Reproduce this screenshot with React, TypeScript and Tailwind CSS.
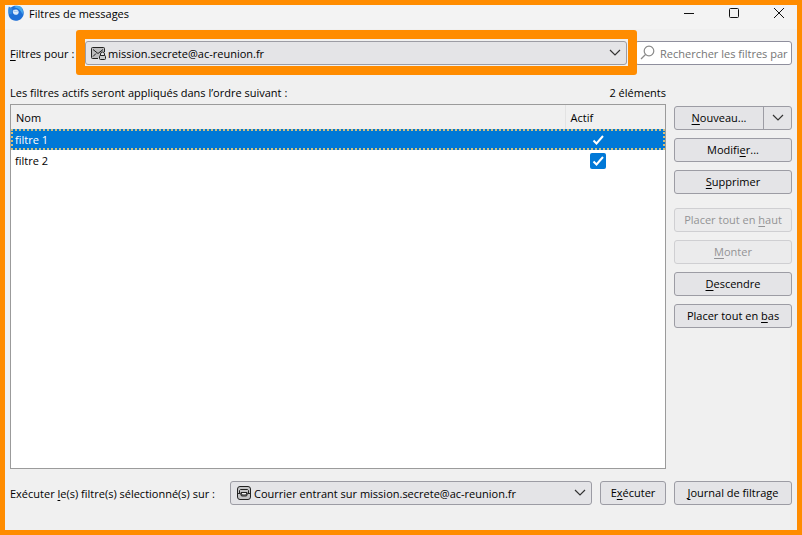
import { useState } from 'react'
import type { ButtonHTMLAttributes, ReactNode } from 'react'

type Filter = { name: string; enabled: boolean }

const initialFilters: Filter[] = [
  { name: 'filtre 1', enabled: true },
  { name: 'filtre 2', enabled: true },
]

// access key letter
function Key({ children }: { children: ReactNode }) {
  return <span className="underline decoration-1 underline-offset-2">{children}</span>
}

function Chevron() {
  return (
    <svg className="h-3 w-3 shrink-0" viewBox="0 0 12 12" fill="none" stroke="#333" strokeWidth="1.2">
      <path d="M1 3 6 8 11 3" />
    </svg>
  )
}

function Button({ children, ...props }: ButtonHTMLAttributes<HTMLButtonElement>) {
  return (
    <button
      type="button"
      className="flex h-6 w-full items-center justify-center rounded-[3px] border border-[#9c9ca4] bg-[#e4e4e7] text-black disabled:border-[#cfcfd2] disabled:bg-[#ebebec] disabled:text-[#939395]"
      {...props}
    >
      <span className="whitespace-nowrap">{children}</span>
    </button>
  )
}

function ThunderbirdLogo() {
  return (
    <svg className="h-4 w-4 shrink-0" viewBox="0 0 16 16">
      <path d="M3 2.5C6-.2 11.5.2 14.3 3.6c2.3 3.2 1.8 7.9-1.3 10.3-3.1 2.5-8.4 2.4-11-.8C-.2 10.3-.1 5.800 3 2.500z" fill="#1e6fd6" />
      <path d="M.8 1.500 4.500 3.500 3.500 9.500.5 8.500C-.1 6 .1 3.500.8 1.500z" fill="#3489e0" />
      <path d="M6 2.200C8.500-.3 12.500.5 14 3c1.200 2 1.200 4.500.3 6.500C13.500 6 11 3.200 6 2.200z" fill="#46a8ee" />
      <path d="M5 5 8 4.500c1.800.2 2.900 1.400 2.700 3-.3 1.600-1.600 2.500-3.100 2.300C5.800 9.700 4.800 8.300 4.800 6.500z" fill="#dcebfb" />
      <path d="M5 5.400c1.100 1.300 3.200 1.500 5 .4" stroke="#9fc4ee" fill="none" />
    </svg>
  )
}

export default function App() {
  const [filters, setFilters] = useState(initialFilters)
  const [selected, setSelected] = useState(0)

  const toggle = (index: number) =>
    setFilters(list => list.map((f, i) => (i === index ? { ...f, enabled: !f.enabled } : f)))

  return (
    <div className="flex min-h-screen flex-col border-[5px] border-[#ff8c00] bg-[#f0f0f0] font-['Open_Sans','Noto_Sans',sans-serif] text-[11px] leading-4 text-black">
      <header className="flex h-6 items-start bg-[#f3f3f3] pr-3 pl-[3px]">
        <ThunderbirdLogo />
        <h1 className="ml-[5px] flex-1 pt-px">Filtres de messages</h1>
        <div className="flex gap-[33px]">
          <button type="button" aria-label="Réduire" className="flex h-4 w-3 items-center justify-center">
            <svg className="h-3 w-3" viewBox="0 0 12 12" stroke="#111"><path d="M1 6.500h10" /></svg>
          </button>
          <button type="button" aria-label="Agrandir" className="flex h-4 w-3 items-center justify-center">
            <svg className="h-3 w-3" viewBox="0 0 12 12" fill="none" stroke="#111"><rect x="1.500" y="1.500" width="9" height="9" rx="1" /></svg>
          </button>
          <button type="button" aria-label="Fermer" className="flex h-4 w-3 items-center justify-center">
            <svg className="h-3 w-3" viewBox="0 0 12 12" stroke="#111"><path d="m1 1 10 10M11 1 1 11" /></svg>
          </button>
        </div>
      </header>

      <main className="flex flex-1 flex-col px-[5px] pt-3 pb-[25px]">
        <div className="flex items-center gap-2">
          <label htmlFor="account" className="w-[67px] shrink-0 pt-px whitespace-nowrap">
            <Key>F</Key>iltres pour :
          </label>
          <div className="relative flex h-6 min-w-0 flex-1 items-center rounded-[3px] border border-[#9c9ca4] bg-[#e4e4e7] pr-[5px] pl-1">
            <svg className="h-4 w-4 shrink-0" viewBox="0 0 16 16" fill="none" stroke="#222">
              <path d="M8 13.500H2.500a1 1 0 0 1-1-1v-9a1 1 0 0 1 1-1h11a1 1 0 0 1 1 1V7" fill="#bdbdbf" />
              <path d="m3 4.500 5 4 5-4M3 11.500l3-3" />
              <path d="M10.500 11V9a2 2 0 0 1 4 0v2" fill="#e4e4e7" />
              <rect x="9.500" y="10.500" width="6" height="4" rx="1" fill="#ccc" />
            </svg>
            <select id="account" className="h-full min-w-0 flex-1 appearance-none bg-transparent pt-px pl-0.5 outline-none">
              <option>mission.secrete@ac-reunion.fr</option>
            </select>
            <Chevron />
            {/* highlight around the account picker */}
            <div className="pointer-events-none absolute -top-3 -right-[11px] -bottom-[11px] -left-[10px] rounded-[3px] border-[9px] border-[#ff8c00]" />
          </div>
          <div className="flex h-6 w-[157px] shrink-0 items-center gap-1 rounded-[3px] border border-[#8f8f9d] bg-white pr-[3px] pl-1">
            <svg className="h-4 w-4 shrink-0" viewBox="0 0 16 16" fill="none" stroke="#8a8a8a" strokeWidth="1.2">
              <circle cx="9" cy="6" r="4.8" />
              <path d="m5.500 9.500-4.500 4.500" />
            </svg>
            <input
              type="text"
              aria-label="Rechercher les filtres"
              placeholder="Rechercher les filtres par"
              className="w-0 min-w-0 flex-1 bg-transparent pt-px outline-none placeholder:text-[#757575]"
            />
          </div>
        </div>

        <div className="mt-5 flex flex-1 gap-2">
          <section className="flex min-w-0 flex-1 flex-col">
            <div className="flex justify-between whitespace-nowrap">
              <p>Les filtres actifs seront appliqués dans l’ordre suivant :</p>
              <p>2 éléments</p>
            </div>
            <div className="mt-[3px] flex-1 border border-[#9b9b9b] bg-white">
              <table className="w-full table-fixed border-collapse text-left">
                <thead>
                  <tr className="h-6 bg-[#f0f0f0]">
                    <th className="border-r border-[#e3e3e3] pt-px pl-[5px] font-normal">Nom</th>
                    <th className="w-[100px] pt-px pl-[5px] font-normal">Actif</th>
                  </tr>
                </thead>
                <tbody>
                  {filters.map((f, i) => (
                    <tr
                      key={f.name}
                      onClick={() => setSelected(i)}
                      className={
                        i === selected
                          ? 'h-[21px] bg-[#0078d7] text-white outline-2 -outline-offset-2 outline-dotted outline-[#d0c080]'
                          : 'h-[21px]'
                      }
                    >
                      <td className="pl-1">{f.name}</td>
                      <td className="pl-[25px]">
                        <span className="relative block h-4 w-4">
                          <input
                            type="checkbox"
                            aria-label={f.name}
                            checked={f.enabled}
                            onChange={() => toggle(i)}
                            className="peer block h-4 w-4 appearance-none rounded-[2px] checked:bg-[#0078d7]"
                          />
                          <svg className="pointer-events-none absolute inset-0 hidden peer-checked:block" viewBox="0 0 16 16" fill="none" stroke="#fff" strokeWidth="2">
                            <path d="m3.500 8.500 3 3 6.500-7.500" />
                          </svg>
                        </span>
                      </td>
                    </tr>
                  ))}
                </tbody>
              </table>
            </div>
          </section>

          <div className="flex w-[118px] shrink-0 flex-col gap-2 pt-[21px]">
            <div className="flex h-6 rounded-[3px] border border-[#9c9ca4] bg-[#e4e4e7]">
              <button type="button" className="flex-1"><Key>N</Key>ouveau...</button>
              <button type="button" aria-label="Autres options" className="flex w-7 items-center justify-center border-l border-[#9c9ca4]">
                <Chevron />
              </button>
            </div>
            <Button>Modifi<Key>e</Key>r...</Button>
            <Button><Key>S</Key>upprimer</Button>
            <div className="mt-[6px] flex flex-col gap-2">
              <Button disabled>Placer tout en <Key>h</Key>aut</Button>
              <Button disabled><Key>M</Key>onter</Button>
              <Button><Key>D</Key>escendre</Button>
              <Button>Placer tout en <Key>b</Key>as</Button>
            </div>
          </div>
        </div>

        <footer className="mt-3 flex items-center gap-2">
          <label htmlFor="folder" className="w-[212px] shrink-0 pt-px whitespace-nowrap">
            Exécuter <Key>l</Key>e(s) filtre(s) sélectionné(s) sur :
          </label>
          <div className="flex h-6 min-w-0 flex-1 items-center rounded-[3px] border border-[#9c9ca4] bg-[#e4e4e7] px-[5px]">
            <svg className="h-4 w-4 shrink-0" viewBox="0 0 16 16" fill="none" stroke="#222">
              <rect x="1.500" y="1.500" width="13" height="13" rx="2.500" fill="#c4c4c6" />
              <path d="M2 8.500h2.500l1 2.500h5l1-2.500H14M3.500 8V5.500l1-1h7l1 1V8" />
              <path d="M5 7.500h6l-1 2.500H6z" fill="#f4f4f5" />
            </svg>
            <select id="folder" className="h-full min-w-0 flex-1 appearance-none bg-transparent pt-px pl-0.5 outline-none">
              <option>Courrier entrant sur mission.secrete@ac-reunion.fr</option>
            </select>
            <Chevron />
          </div>
          <div className="w-[66px] shrink-0"><Button>E<Key>x</Key>écuter</Button></div>
          <div className="w-[118px] shrink-0"><Button><Key>J</Key>ournal de filtrage</Button></div>
        </footer>
      </main>
    </div>
  )
}
